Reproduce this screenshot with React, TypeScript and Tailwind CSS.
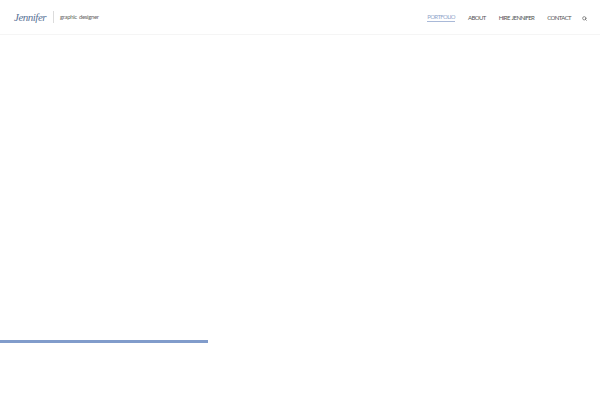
import { Search } from 'lucide-react'

const links = ['ABOUT', 'HIRE JENNIFER', 'CONTACT']

export default function App() {
  return (
    <div className="h-[400px] w-[600px] overflow-hidden bg-white font-['Lato',sans-serif]">
      <header className="flex h-[35px] items-center justify-between border-b border-[#f5f5f5] pl-[14px] pr-[13px]">
        <div className="flex items-center">
          <span className="w-[32px] whitespace-nowrap font-['Liberation_Serif',serif] text-[11px] leading-none tracking-[-0.5px] text-[#5a7498] italic">
            Jennifer
          </span>
          <span className="ml-[7px] h-[12px] w-px bg-[#dcdcdc]" />
          <span className="ml-[6px] text-[6px] leading-none tracking-[-0.35px] [word-spacing:1px] text-[#666]">graphic designer</span>
        </div>
        <nav className="flex translate-y-px items-center text-[6px] leading-none tracking-[-0.6px] [word-spacing:1px] text-[#555]">
          <a className="border-b border-[#a9b9d8] pb-px text-[#93a6cb]">PORTFOLIO</a>
          {links.map((link) => (
            <a key={link} className="ml-[13px]">
              {link}
            </a>
          ))}
          <Search className="ml-[11px] h-[5px] w-[5px] text-[#555]" strokeWidth={3} />
        </nav>
      </header>
      <main className="flex h-[308px] items-end">
        <div className="h-[3px] w-[208px] bg-[#819ccb]" />
      </main>
    </div>
  )
}
